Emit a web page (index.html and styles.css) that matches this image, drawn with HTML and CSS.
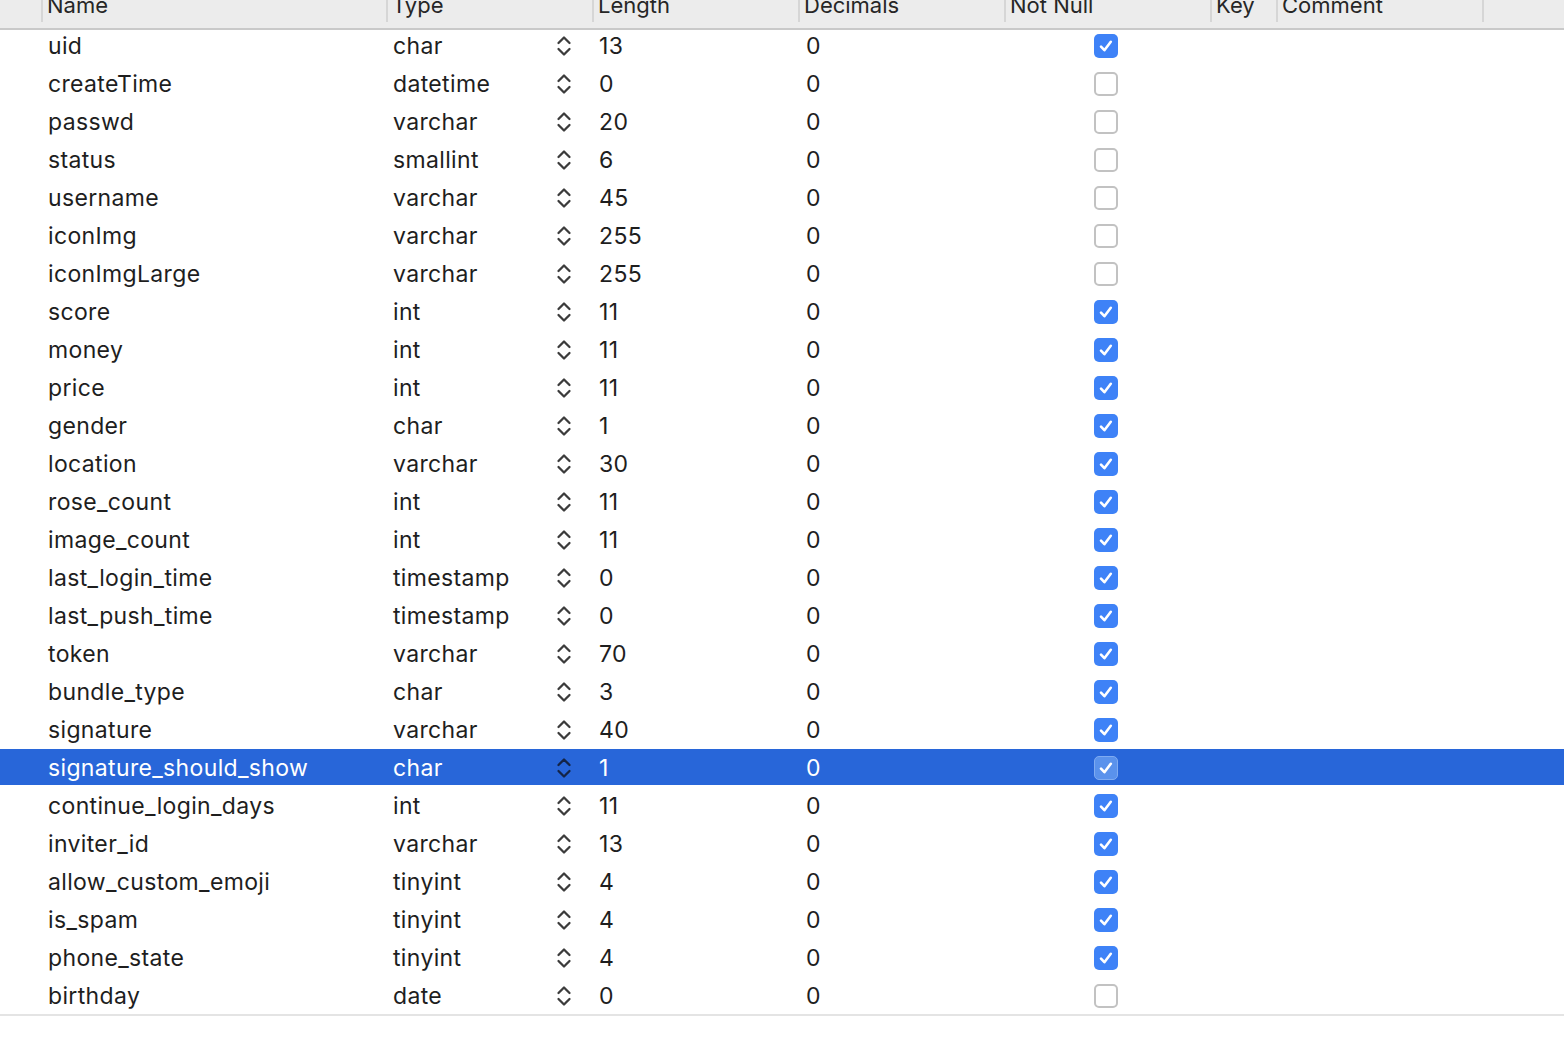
FILE: index.html
```html
<!DOCTYPE html>
<html>
<head>
<meta charset="utf-8">
<link rel="stylesheet" href="styles.css">
</head>
<body>
<div class="table">
  <div class="header">
    <div class="hcell first"></div>
    <div class="hcell"><span>Name</span></div>
    <div class="hcell"><span>Type</span></div>
    <div class="hcell"><span>Length</span></div>
    <div class="hcell"><span>Decimals</span></div>
    <div class="hcell"><span>Not Null</span></div>
    <div class="hcell"><span>Key</span></div>
    <div class="hcell"><span>Comment</span></div>
    <div class="hcell"></div>
  </div>
  <div class="body" id="rows"></div>
</div>
<script src="app.js"></script>
</body>
</html>
```

FILE: app.js
```js
const data = [
  ["uid","char","13",1],
  ["createTime","datetime","0",0],
  ["passwd","varchar","20",0],
  ["status","smallint","6",0],
  ["username","varchar","45",0],
  ["iconImg","varchar","255",0],
  ["iconImgLarge","varchar","255",0],
  ["score","int","11",1],
  ["money","int","11",1],
  ["price","int","11",1],
  ["gender","char","1",1],
  ["location","varchar","30",1],
  ["rose_count","int","11",1],
  ["image_count","int","11",1],
  ["last_login_time","timestamp","0",1],
  ["last_push_time","timestamp","0",1],
  ["token","varchar","70",1],
  ["bundle_type","char","3",1],
  ["signature","varchar","40",1],
  ["signature_should_show","char","1",1],
  ["continue_login_days","int","11",1],
  ["inviter_id","varchar","13",1],
  ["allow_custom_emoji","tinyint","4",1],
  ["is_spam","tinyint","4",1],
  ["phone_state","tinyint","4",1],
  ["birthday","date","0",0]
];
const stepper = '<svg class="stepper" width="16" height="26" viewBox="0 0 16 26"><path d="M2.5 10 L8 4.5 L13.5 10" fill="none" stroke="currentColor" stroke-width="2.3" stroke-linecap="round" stroke-linejoin="round"/><path d="M2.5 16 L8 21.5 L13.5 16" fill="none" stroke="currentColor" stroke-width="2.3" stroke-linecap="round" stroke-linejoin="round"/></svg>';
const check = '<svg width="18" height="18" viewBox="0 0 18 18"><path d="M4 9.6 L7.4 13.2 L13.8 4.8" fill="none" stroke="#fff" stroke-width="2.6" stroke-linecap="round" stroke-linejoin="round"/></svg>';
const rows = document.getElementById('rows');
rows.innerHTML = data.map((r, i) => `
<div class="row${i === 19 ? ' selected' : ''}">
  <div class="cell"></div>
  <div class="cell name">${r[0]}</div>
  <div class="cell type"><span>${r[1]}</span>${stepper}</div>
  <div class="cell len">${r[2]}</div>
  <div class="cell dec">0</div>
  <div class="cell nn"><span class="cb${r[3] ? ' on' : ''}">${r[3] ? check : ''}</span></div>
  <div class="cell"></div>
  <div class="cell"></div>
  <div class="cell"></div>
</div>`).join('');
```

FILE: styles.css
```css
html, body {
  margin: 0;
  padding: 0;
  background: #ffffff;
}
body {
  font-family: Inter, "Noto Sans", "Liberation Sans", sans-serif;
  font-size: 23px;
  letter-spacing: 0.35px;
  color: #1e1e1e;
  width: 1564px;
  height: 1042px;
  overflow: hidden;
}
.table {
  display: flex;
  flex-direction: column;
}
.header,
.row {
  display: grid;
  grid-template-columns: 41px 345px 206px 206px 206px 206px 66px 206px 1fr;
}
.header {
  position: relative;
  z-index: 2;
  height: 28px;
  background: #ececec;
  border-bottom: 2px solid #c9c9c9;
  overflow: hidden;
}
.hcell {
  height: 22px;
  border-left: 2px solid #d6d6d6;
  padding-left: 4px;
  color: #262626;
  font-size: 22px;
  letter-spacing: 0;
  line-height: 22px;
  overflow: hidden;
}
.hcell.first {
  border-left: none;
}
.hcell span {
  display: block;
  margin-top: -6px;
  white-space: nowrap;
}
.body {
  margin-top: -4px;
  border-bottom: 2px solid #e4e4e4;
}
.row {
  height: 38px;
  align-items: center;
}
.row > .cell {
  padding-top: 1px;
}
.row.selected {
  background: #2866d9;
  color: #ffffff;
  height: 36px;
  margin: 1px 0;
}
.cell {
  padding-left: 7px;
  white-space: nowrap;
}
.type {
  display: flex;
  align-items: center;
  justify-content: space-between;
  padding-right: 20px;
}
.stepper {
  color: #3c3c3c;
  display: block;
}
.selected .stepper {
  color: #142446;
}
.dec {
  padding-left: 8px;
}
.nn {
  display: flex;
  justify-content: center;
  padding-left: 0;
  padding-right: 2px;
}
.cb {
  box-sizing: border-box;
  width: 24px;
  height: 24px;
  border-radius: 5px;
  border: 2px solid #c2c2c2;
  background: #ffffff;
  display: flex;
  align-items: center;
  justify-content: center;
}
.cb.on {
  background: #3e82f7;
  border: none;
}
.selected .cb.on {
  background: #5a92ec;
  border: 1px solid #7fabf1;
}
```
